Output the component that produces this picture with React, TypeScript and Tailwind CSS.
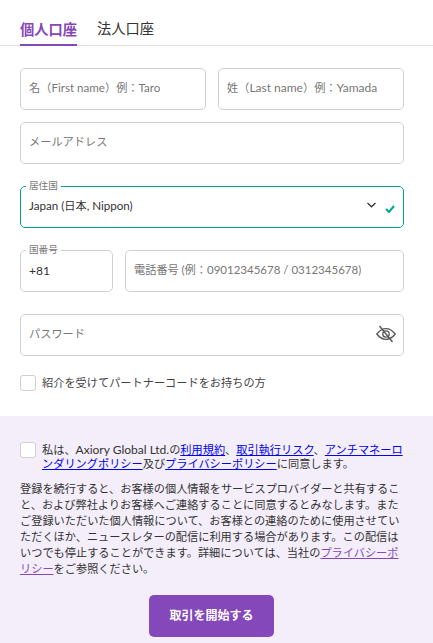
const fontStack = "font-['Lato','Noto_Sans_CJK_JP',sans-serif]";

function Latin({ children, size = "text-[12px]" }: { children: React.ReactNode; size?: string }) {
  return <span className={size}>{children}</span>;
}

function Field({ children, className = "" }: { children: React.ReactNode; className?: string }) {
  return (
    <div className={`h-[42px] flex items-center rounded-[5px] border border-[#d0d0d0] bg-white px-2 pb-[2px] text-[11.2px] text-[#777] ${className}`}>
      <span className="truncate">{children}</span>
    </div>
  );
}

function FloatLabel({ text }: { text: string }) {
  return (
    <span className="absolute left-[5px] -top-[8px] bg-white px-[3px] text-[9.6px] leading-[14px] text-[#777]">
      {text}
    </span>
  );
}

function EyeSlash() {
  return (
    <svg className="absolute right-[8px] top-[11px]" width="20" height="18" viewBox="0 0 20 18" fill="none" stroke="#555" strokeWidth="1.3">
      <path d="M.8 9C3.500 5.500 6.500 3.600 10 3.600s6.500 1.900 9.200 5.400C16.500 12.500 13.500 14.400 10 14.400S3.500 12.500.8 9z" />
      <circle cx="10" cy="9" r="3.200" />
      <path d="M3.500 1l13 16" />
    </svg>
  );
}

const blueLink = "text-[#0000ee] underline";

export default function App() {
  return (
    <div className={`h-[643px] w-[433px] overflow-hidden bg-white flex flex-col ${fontStack}`}>
      <div className="h-[46px] flex items-end gap-5 border-b border-[#e2e2e2] px-5">
        <div className="h-[26px] w-[57px] border-b-2 border-[#8548ba] text-[14.25px] font-bold leading-5 text-[#8548ba] -mb-px">個人口座</div>
        <div className="h-[26px] w-[57px] text-[14.25px] leading-5 text-[#333]">法人口座</div>
      </div>

      <div className="flex flex-col pl-5 pr-[29px] pt-[22px]">
        <div className="flex gap-3">
          <Field className="flex-1">名（<Latin size="text-[11.6px]">First name</Latin>）例：<Latin size="text-[11.6px]">Taro</Latin></Field>
          <Field className="flex-1">姓（<Latin>Last name</Latin>）例：<Latin>Yamada</Latin></Field>
        </div>
        <Field className="mt-[12px]">メールアドレス</Field>

        <div className="relative mt-[22px] h-[42px] flex items-center rounded-[5px] border border-[#00a58a] px-2 pb-[2px] text-[11.2px] text-[#333]">
          <FloatLabel text="居住国" />
          <span><Latin size="text-[11.6px]">Japan (</Latin>日本<Latin size="text-[11.6px]">, Nippon)</Latin></span>
          <svg className="ml-auto mb-[2px]" width="9" height="6" viewBox="0 0 9 6" fill="none" stroke="#333" strokeWidth="1.2">
            <path d="M.5 1l4 3.800 4-3.800" />
          </svg>
          <svg className="ml-[9px] mt-[5px]" width="10" height="8" viewBox="0 0 10 8" fill="none" stroke="#00a58a" strokeWidth="2">
            <path d="M1 4l3 3 5-6" />
          </svg>
        </div>

        <div className="mt-[22px] flex gap-3">
          <div className="relative h-[42px] w-[93px] flex items-center rounded-[5px] border border-[#d0d0d0] px-2 text-[#333]">
            <FloatLabel text="国番号" />
            <Latin>+81</Latin>
          </div>
          <Field className="flex-1">電話番号 (例：<Latin size="text-[11.5px]">09012345678 / 0312345678</Latin>)</Field>
        </div>

        <div className="mt-[22px] relative">
          <Field>パスワード</Field>
          <EyeSlash />
        </div>

        <div className="mt-[19px] flex items-center gap-[6px] text-[11.2px] text-[#444]">
          <span className="h-4 w-4 rounded-[3px] border border-[#d0d0d0] bg-white" />
          <span>紹介を受けてパートナーコードをお持ちの方</span>
        </div>
      </div>

      <div className="mt-[24px] flex-1 bg-[#f3eefa] pl-5 pr-[29px] pt-[26px]">
        <div className="flex gap-[6px]">
          <span className="h-4 w-4 shrink-0 rounded-[3px] border border-[#d0d0d0] bg-white" />
          <p className="pt-px text-[11.2px] leading-[14px] text-[#333]">
            私は、<Latin>Axiory Global Ltd.</Latin>の<a href="#" className={blueLink}>利用規約</a>、<a href="#" className={blueLink}>取引執行リスク</a>、<a href="#" className={blueLink}>アンチマネーロンダリングポリシー</a>及び<a href="#" className={blueLink}>プライバシーポリシー</a>に同意します。
          </p>
        </div>
        <p className="mt-[10px] text-[11.2px] leading-4 text-[#333]">
          登録を続行すると、お客様の個人情報をサービスプロバイダーと共有すること、および弊社よりお客様へご連絡することに同意するとみなします。またご登録いただいた個人情報について、お客様との連絡のために使用させていただくほか、ニュースレターの配信に利用する場合があります。この配信はいつでも停止することができます。詳細については、当社の<a href="#" className="text-[#8548ba] underline">プライバシーポリシー</a>をご参照ください。
        </p>
        <div className="mt-[18px] flex justify-center pr-px">
          <button className="h-[42px] w-[125px] rounded-[5px] bg-[#8548ba] text-[12px] font-bold text-white">取引を開始する</button>
        </div>
      </div>
    </div>
  );
}
